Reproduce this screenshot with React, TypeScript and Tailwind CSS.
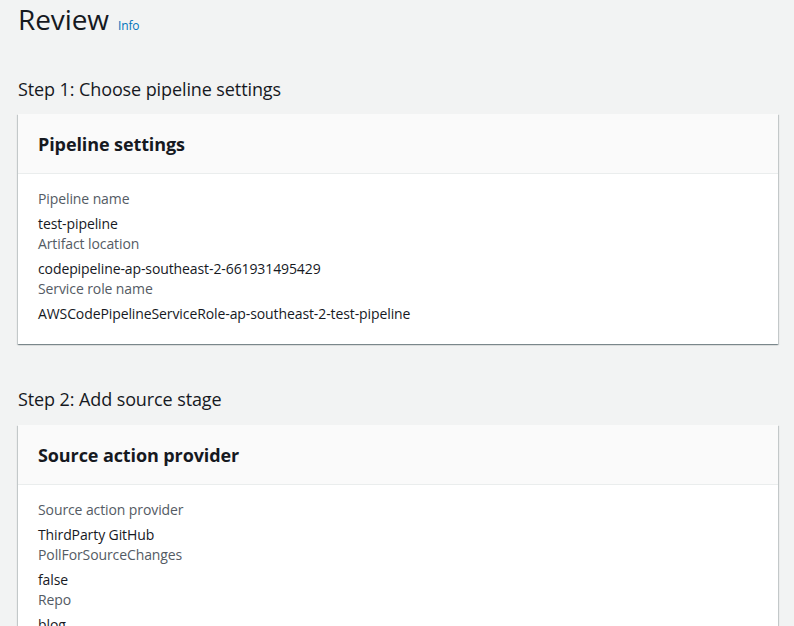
import React from "react";

const Field = ({ label, value }: { label: string; value: string }) => (
  <div className="flex flex-col">
    <div className="text-[14px] leading-[20px] text-[#545b64]">{label}</div>
    <div className="text-[14px] leading-[20px] text-[#16191f] mt-[5px]">{value}</div>
  </div>
);

const Card = ({ title, fields }: { title: string; fields: [string, string][] }) => (
  <div className="bg-white shadow-[0_1px_1px_0_rgba(0,28,36,0.3),1px_1px_1px_0_rgba(0,28,36,0.15),-1px_1px_1px_0_rgba(0,28,36,0.15)]">
    <div className="bg-[#fafafa] border-b border-[#eaeded] h-[60px] flex items-center px-[20px]">
      <h2 className="text-[18px] font-bold text-[#16191f] leading-[22px]">{title}</h2>
    </div>
    <div className="px-[20px] pt-[15px] pb-[20px] flex flex-col">
      {fields.map(([l, v], i) => (
        <Field key={i} label={l} value={v} />
      ))}
    </div>
  </div>
);

export default function App() {
  return (
    <div
      className="h-[626px] bg-[#f2f3f3] pl-[18px] pr-[16px] overflow-hidden tracking-[-0.1px]"
      style={{ fontFamily: '"Open Sans", "Noto Sans", Arial, sans-serif' }}
    >
      <div className="flex items-baseline pt-[2px] h-[40px]">
        <h1 className="text-[28px] leading-[34px] text-[#16191f] font-normal">Review</h1>
        <span className="ml-[9px] text-[12px] text-[#0073bb]">Info</span>
      </div>
      <div className="mt-[38px] text-[18px] leading-[22px] text-[#16191f]">Step 1: Choose pipeline settings</div>
      <div className="mt-[14px]">
        <Card
          title="Pipeline settings"
          fields={[
            ["Pipeline name", "test-pipeline"],
            ["Artifact location", "codepipeline-ap-southeast-2-661931495429"],
            ["Service role name", "AWSCodePipelineServiceRole-ap-southeast-2-test-pipeline"],
          ]}
        />
      </div>
      <div className="mt-[44px] text-[18px] leading-[22px] text-[#16191f]">Step 2: Add source stage</div>
      <div className="mt-[15px]">
        <Card
          title="Source action provider"
          fields={[
            ["Source action provider", "ThirdParty GitHub"],
            ["PollForSourceChanges", "false"],
            ["Repo", "blog"],
          ]}
        />
      </div>
    </div>
  );
}
